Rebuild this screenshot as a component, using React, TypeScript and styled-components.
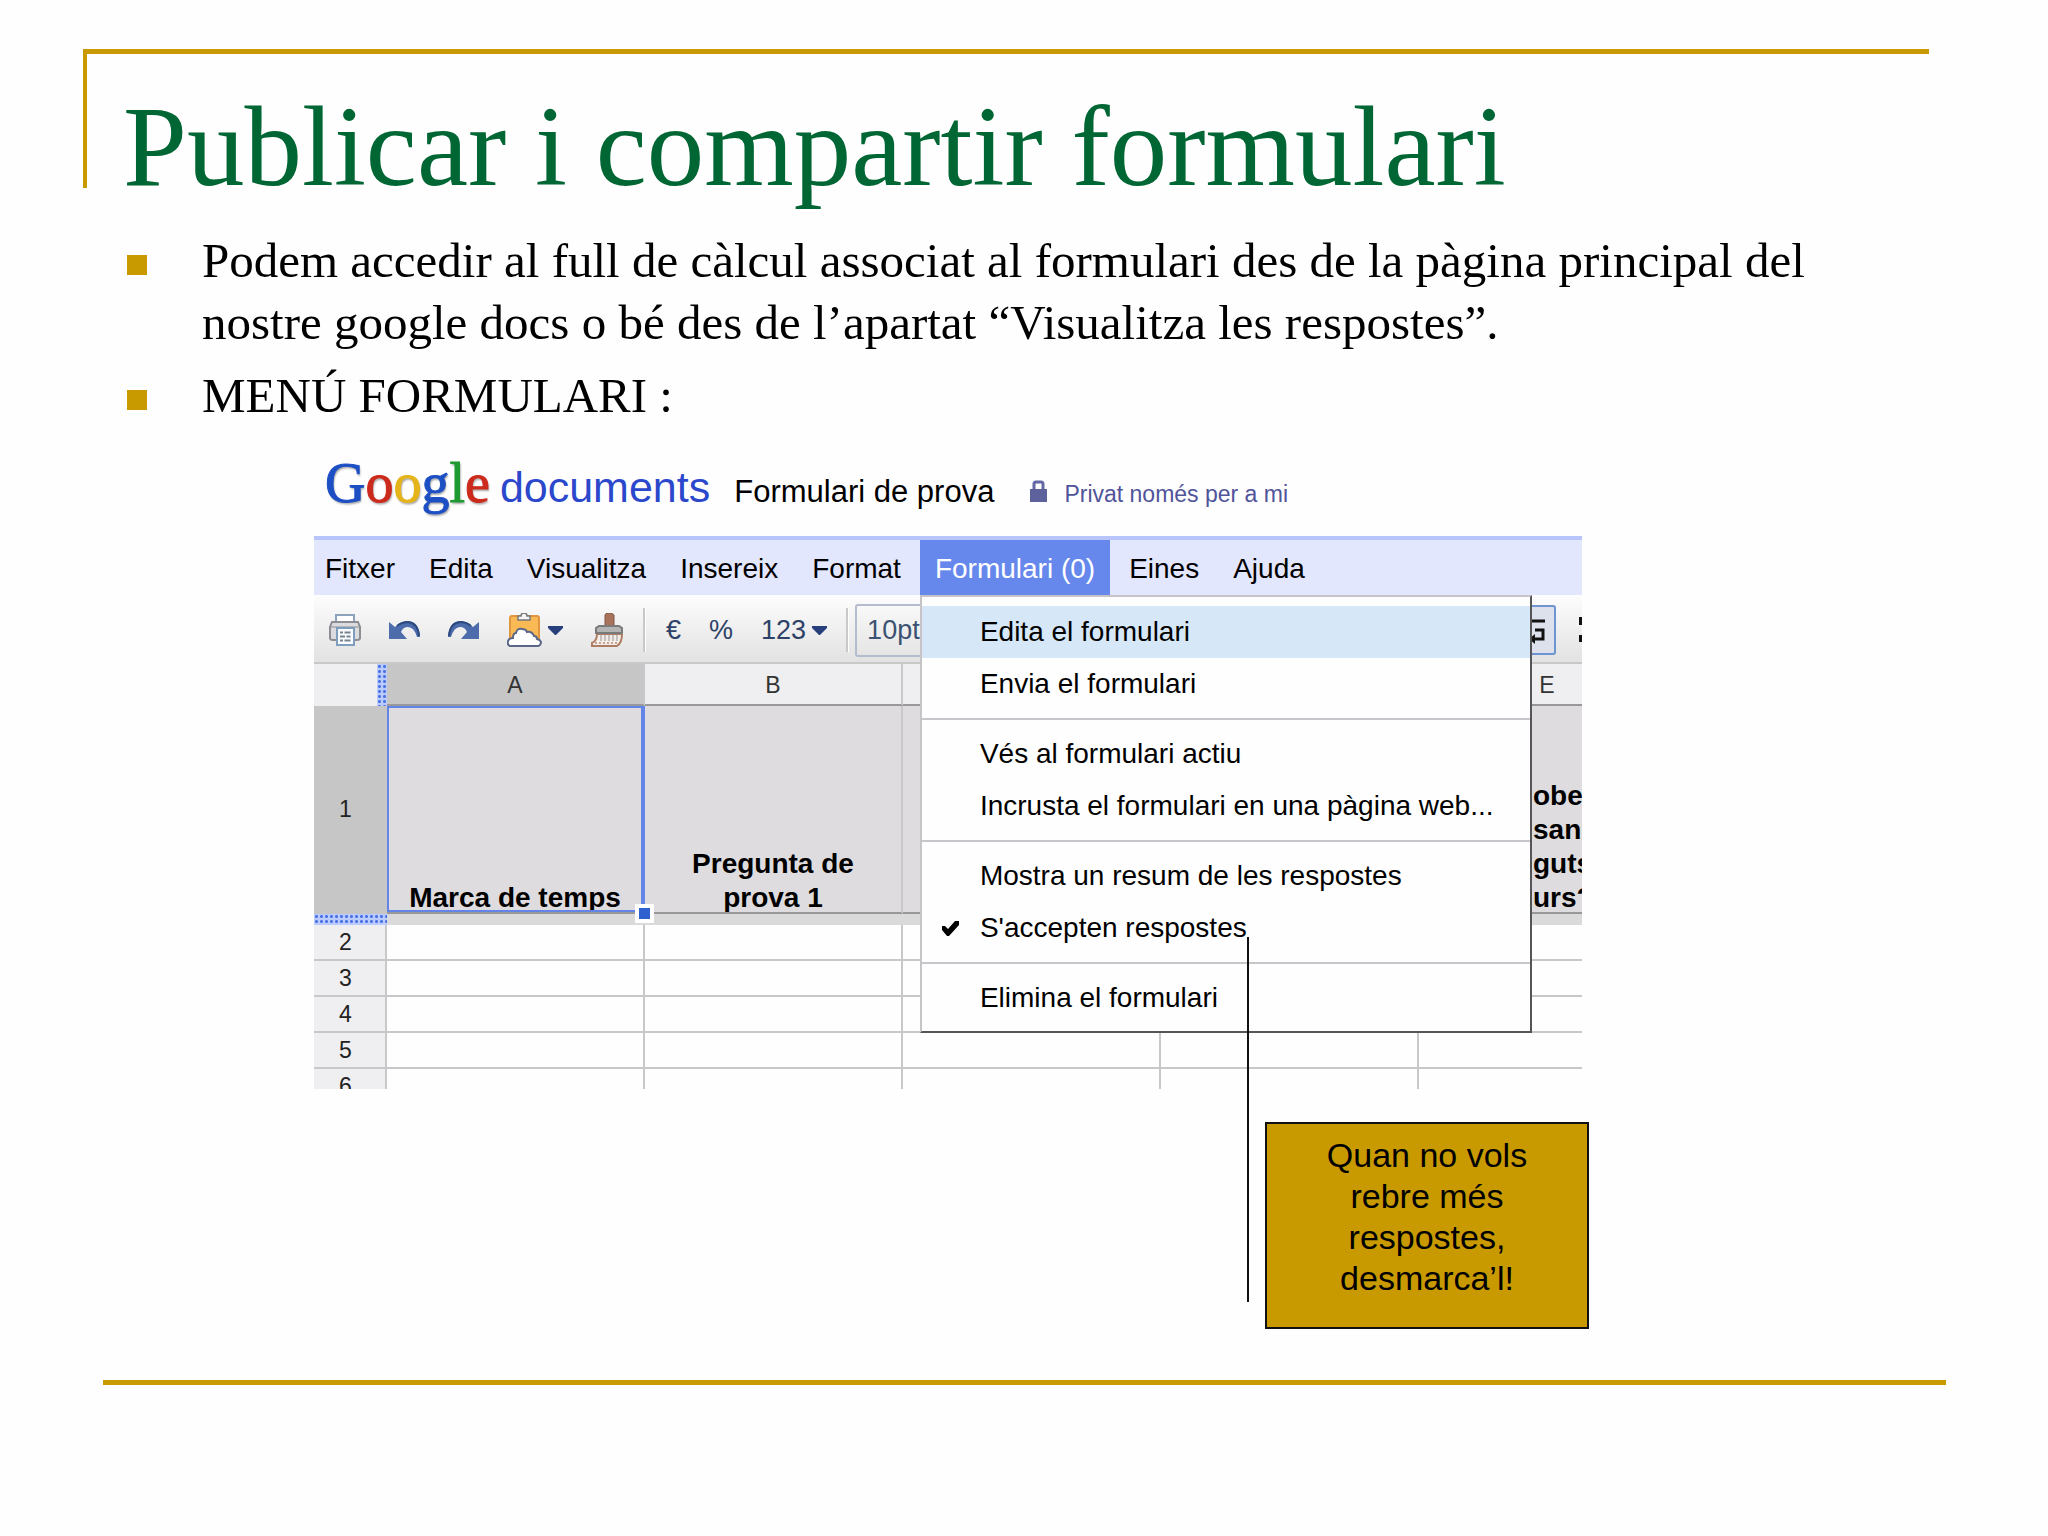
import React from "react";
import styled, { createGlobalStyle, css } from "styled-components";

const gold = "#c99a00";
const sans = '"Liberation Sans", Arial, sans-serif';
const serif = '"Liberation Serif", "Times New Roman", serif';

const GlobalStyle = createGlobalStyle`
  *, *::before, *::after { box-sizing: border-box; }
  body { margin: 0; background: #fefefe; color: #000; font-family: ${sans}; }
  button, select { font: inherit; color: inherit; margin: 0; }
`;

const Slide = styled.main`
  min-height: 100vh;
  padding: 49px 102px 60px 83px;
`;

const SlideHeader = styled.header`
  height: 139px;
  margin-right: 17px;
  padding: 26px 0 0 36px;
  border-top: 5px solid ${gold};
  border-left: 4px solid ${gold};
`;

const Title = styled.h1`
  margin: 0;
  font: 400 115px/134px ${serif};
  color: #006633;
  white-space: nowrap;
`;

const Points = styled.ul`
  display: flex;
  flex-direction: column;
  gap: 11px;
  margin: 42px 0 0 44px;
  padding: 0;
  list-style: none;
  font: 400 49px/62px ${serif};
`;

const Point = styled.li`
  display: flex;
  gap: 55px;
  max-width: 1700px;

  &::before {
    content: "";
    flex: none;
    width: 20px;
    height: 20px;
    margin-top: 25px;
    background: ${gold};
  }
`;

const Figure = styled.figure`
  position: relative;
  margin: 33px 0 0 231px;
`;

const Capture = styled.div`
  max-width: 1268px;
`;

const DocHeader = styled.div`
  display: flex;
  align-items: baseline;
  height: 76px;
  padding-left: 11px;
  line-height: 46px;
  white-space: nowrap;
`;

const Logo = styled.span`
  font-family: ${serif};
  font-size: 56px;
  text-shadow: 1px 2px 2px rgba(0, 0, 0, 0.35);
`;

const Letter = styled.span<{ $color: string }>`
  color: ${(p) => p.$color};
  -webkit-text-stroke: 1px ${(p) => p.$color};
`;

const Product = styled.span`
  margin-left: 10px;
  font-size: 43px;
  color: #2b48cc;
`;

const DocName = styled.span`
  margin-left: 24px;
  font-size: 31px;
`;

const Privacy = styled.span`
  display: flex;
  align-items: baseline;
  gap: 17px;
  margin-left: 36px;
  font-size: 23px;
  color: #50549a;
`;

const MenuBar = styled.nav`
  display: flex;
  gap: 4px;
  height: 59px;
  border-top: 4px solid #b7c5fb;
  background: #e3e7fd;
`;

const MenuSlot = styled.div`
  position: relative;
  display: flex;
`;

const MenuButton = styled.button<{ $open?: boolean }>`
  padding: 2px 15px 0;
  border: 0;
  background: ${(p) => (p.$open ? "#6688ec" : "transparent")};
  color: ${(p) => (p.$open ? "#fff" : "#000")};
  font-size: 28px;
  white-space: nowrap;

  ${MenuSlot}:first-child & {
    padding-left: 11px;
  }
`;

const Dropdown = styled.div`
  position: absolute;
  z-index: 2;
  top: 100%;
  left: 0;
  width: 612px;
  padding: 9px 0 7px;
  border: 2px solid #555457;
  border-top-color: #c6c4c6;
  border-left-color: #c6c4c6;
  background: #fefefe;
`;

const Item = styled.button<{ $active?: boolean }>`
  display: flex;
  align-items: center;
  width: 100%;
  height: 52px;
  padding: 0;
  border: 0;
  background: ${(p) => (p.$active ? "#d6e8f7" : "transparent")};
  font-size: 28px;
  text-align: left;
`;

const Mark = styled.span`
  display: flex;
  justify-content: center;
  width: 58px;
`;

const Divider = styled.hr`
  height: 2px;
  margin: 8px 0;
  border: 0;
  background: #c8c6ca;
`;

const Toolbar = styled.div`
  display: flex;
  align-items: center;
  height: 69px;
  padding: 3px 0 0 1px;
  overflow: hidden;
  border-bottom: 2px solid #c8c8c8;
  background: linear-gradient(#fdfdfd, #e2e2e2);
`;

const Tool = styled.button`
  display: flex;
  align-items: center;
  gap: 6px;
  flex: none;
  height: 50px;
  padding: 0 14px;
  border: 0;
  background: transparent;
  color: #2d4266;
  font-size: 27px;
`;

const ToolSeparator = styled.span`
  flex: none;
  width: 3px;
  height: 44px;
  margin: 0 6px 0 5px;
  border-left: 2px solid #c9c9cb;
  border-right: 1px solid #fff;
`;

const SizeSelect = styled.select`
  flex: none;
  width: 130px;
  height: 53px;
  padding: 0 10px;
  border: 2px solid #b4bccd;
  border-radius: 3px;
  background: transparent;
  color: #3c5272;
  font-size: 27px;
  appearance: none;
`;

const WrapTool = styled.button`
  display: flex;
  align-items: center;
  justify-content: flex-end;
  flex: none;
  width: 54px;
  height: 50px;
  margin-left: auto;
  padding: 0 8px;
  border: 2px solid #6e94d2;
  border-radius: 3px;
  background: #dde1ec;
`;

const ClippedTool = styled.button`
  flex: none;
  width: 26px;
  padding: 0 0 0 23px;
  border: 0;
  background: transparent;
`;

const Sheet = styled.div`
  height: 425px;
  overflow: hidden;
`;

const Grid = styled.table`
  width: 1363px;
  table-layout: fixed;
  border-collapse: separate;
  border-spacing: 0;
`;

const RowHeadCol = styled.col`
  width: 73px;
`;

const dots = css`
  background-color: #bccbfd;
  background-image: radial-gradient(circle, #4a72e2 1px, transparent 2px);
  background-size: 5px 5px;
`;

const Corner = styled.td`
  padding: 0;
  background: #efeef1;
`;

const FreezeHandle = styled.div`
  width: 10px;
  height: 42px;
  margin-left: auto;
  ${dots}
`;

const ColHead = styled.th<{ $selected?: boolean }>`
  height: 42px;
  padding: 2px 0 0;
  border-right: 2px solid #c8c7ca;
  border-bottom: 2px solid #98979a;
  background: ${(p) => (p.$selected ? "#c6c6c7" : "#efeef0")};
  color: #333;
  font-size: 23px;
  font-weight: 400;
`;

const RowHead = styled.th<{ $selected?: boolean }>`
  padding: 0 8px 0 0;
  border-right: 2px solid #c8c7ca;
  border-bottom: 2px solid #c8c7ca;
  ${(p) =>
    p.$selected && css`border-color: #c6c6c7;`}
  background: ${(p) => (p.$selected ? "#c6c6c7" : "#efeef0")};
  color: #222;
  font-size: 23px;
  line-height: 26px;
  font-weight: 400;
`;

const QuestionCell = styled.td`
  position: relative;
  height: 208px;
  padding: 0;
  border-right: 2px solid #c8c7ca;
  border-bottom: 2px solid #98979a;
  background: #dedcde;
  font-size: 28px;
  line-height: 34px;
  font-weight: 700;
  text-align: center;
`;

const Question = styled.div<{ $selected?: boolean; $cut?: boolean }>`
  display: flex;
  flex-direction: column;
  justify-content: flex-end;
  height: 206px;
  overflow: hidden;
  ${(p) =>
    p.$selected &&
    css`
      &::after {
        content: "";
        position: absolute;
        inset: 0 -2px 0 0;
        border: 2px solid #6485e8;
        border-right-width: 4px;
      }
    `}
  ${(p) =>
    p.$cut &&
    css`
      padding-left: 114px;
      text-align: left;
    `}
`;

const QuestionText = styled.span`
  margin-bottom: -3px;
  white-space: nowrap;
`;

const FillHandle = styled.span`
  position: absolute;
  z-index: 1;
  right: -11px;
  bottom: -11px;
  width: 19px;
  height: 19px;
  border: 4px solid #fff;
  background: #2f60d0;
`;

const FreezeRowHandle = styled.td`
  height: 11px;
  padding: 0;
  ${dots}
`;

const FreezeBar = styled.td`
  height: 11px;
  padding: 0;
  background: #dadadb;
`;

const Cell = styled.td`
  height: 36px;
  padding: 0;
  border-right: 2px solid #c8c7ca;
  border-bottom: 2px solid #c8c7ca;
  background: #fefefe;
`;

const Leader = styled.div`
  position: absolute;
  z-index: 3;
  top: 477px;
  left: 933px;
  width: 2px;
  height: 365px;
  background: #111;
`;

const Callout = styled.figcaption`
  width: 324px;
  margin: 33px 0 0 951px;
  padding: 11px 50px 28px;
  border: 2px solid #111;
  background: ${gold};
  font-size: 34px;
  line-height: 41px;
  text-align: center;
`;

const BottomRule = styled.hr`
  height: 5px;
  margin: 51px 0 0 20px;
  border: 0;
  background: ${gold};
`;

const LockIcon = () => (
  <svg width="17" height="22" viewBox="0 0 17 22" aria-hidden="true">
    <path d="M4 10V4q0-2 2-2h5q2 0 2 2v6" fill="none" stroke="#6468a4" strokeWidth="3" />
    <rect y="9" width="17" height="13" fill="#5d619c" />
  </svg>
);

const PrinterIcon = () => (
  <svg width="32" height="32" viewBox="0 0 32 32" aria-hidden="true">
    <path d="M7 9V1h18v8" fill="#fff" stroke="#8ba3bd" strokeWidth="2" />
    <path d="M3 8h26l2 5v11q0 2-3 2H4q-3 0-3-2V13z" fill="#dcdcde" stroke="#8c8e94" strokeWidth="2" />
    <path d="M2 13h28" stroke="#b4b5ba" strokeWidth="2" />
    <rect x="8" y="14" width="17" height="17" fill="#fafcff" stroke="#7f9dbc" strokeWidth="2" />
    <path d="M11 18.500h3m1.500 0h6M11 22.500h5m1.500 0h4M11 26.500h3m1.500 0h6" stroke="#77828f" strokeWidth="2" />
  </svg>
);

const UndoIcon = () => (
  <svg width="31" height="19" viewBox="0 0 31 19" aria-hidden="true">
    <path d="M0 1l6 5Q12 0 19 0q11 1 12 16h-3Q25 6 19 6q-5 0-7 5l6 7H0z" fill="#4c6cab" />
    <path d="M8 5q5-4 11-4 10 1 11 14" fill="none" stroke="#2c4a80" strokeWidth="2" />
  </svg>
);

const RedoIcon = () => (
  <svg width="31" height="19" viewBox="0 0 31 19" aria-hidden="true">
    <path d="M31 1l-6 5Q19 0 12 0 1 1 0 16h3Q6 6 12 6q5 0 7 5l-6 7h18z" fill="#4c6cab" />
    <path d="M23 5q-5-4-11-4Q2 2 1 15" fill="none" stroke="#2c4a80" strokeWidth="2" />
  </svg>
);

const ClipboardIcon = () => (
  <svg width="35" height="34" viewBox="0 0 35 34" aria-hidden="true">
    <rect x="3" y="3" width="29" height="27" rx="2" fill="#f9b955" stroke="#de9640" strokeWidth="2" />
    <path d="M11 3h3q0-3 3-3t3 3h3v4H11z" fill="#f4f4f4" stroke="#77777c" strokeWidth="1.500" />
    <path
      d="M3 33q-3-1-2-5 1-3 5-3 0-5 3-5 1-5 6-4 4 0 5 3 5-1 7 4 3 0 3 3 4 1 4 4-1 3-3 3z"
      fill="#fff"
      stroke="#5a6788"
      strokeWidth="2"
    />
  </svg>
);

const BrushIcon = () => (
  <svg width="33" height="34" viewBox="0 0 33 34" aria-hidden="true">
    <path d="M14 13V2q0-2 4-2t5 2v11" fill="#a9735b" stroke="#7e5848" strokeWidth="1" />
    <path d="M6 21q0 7-5 9v3h25q5-3 5-12z" fill="#f3ece8" stroke="#ae7c62" strokeWidth="2" />
    <path d="M5 20v-5l3-2h20l3 2v5z" fill="#b4b4b4" stroke="#7a7a7a" strokeWidth="2" />
    <path d="M10 22v6m4-6v6m4-6v6m4-6v6m4-6v6" stroke="#b5b1af" strokeWidth="1.500" />
    <path d="M4 30h23" stroke="#b98c76" strokeWidth="1.500" strokeDasharray="2 2" />
  </svg>
);

const Caret = () => (
  <svg width="15" height="9" viewBox="0 0 15 9" aria-hidden="true">
    <path d="M0 0h15v2L8 9H7L0 2z" fill="#27407c" />
  </svg>
);

const WrapIcon = () => (
  <svg width="28" height="30" viewBox="0 0 28 30" aria-hidden="true">
    <path d="M2 6h25M17 15h8v9H14" fill="none" stroke="#111" strokeWidth="3" />
    <path d="M17 19v10l-6-5z" fill="#111" />
  </svg>
);

const AlignMark = () => (
  <svg width="3" height="30" viewBox="0 0 3 30" aria-hidden="true">
    <path d="M0 4h3v8H0zM0 22h3v7H0z" fill="#111" />
  </svg>
);

const CheckIcon = () => (
  <svg width="17" height="16" viewBox="0 0 17 16" aria-hidden="true">
    <path d="M0 6h3l3 3 7-8h4v4L7 16H5L0 10z" fill="#000" />
  </svg>
);

const logoLetters = [
  ["G", "#1d4fc4"],
  ["o", "#cc2a1c"],
  ["o", "#e5b41a"],
  ["g", "#1d4fc4"],
  ["l", "#1f9a30"],
  ["e", "#cc2a1c"],
];

const FormMenu = () => (
  <Dropdown role="menu" aria-label="Formulari">
    <Item role="menuitem" $active><Mark />Edita el formulari</Item>
    <Item role="menuitem"><Mark />Envia el formulari</Item>
    <Divider />
    <Item role="menuitem"><Mark />Vés al formulari actiu</Item>
    <Item role="menuitem"><Mark />Incrusta el formulari en una pàgina web...</Item>
    <Divider />
    <Item role="menuitem"><Mark />Mostra un resum de les respostes</Item>
    <Item role="menuitemcheckbox" aria-checked="true">
      <Mark><CheckIcon /></Mark>S'accepten respostes
    </Item>
    <Divider />
    <Item role="menuitem"><Mark />Elimina el formulari</Item>
  </Dropdown>
);

const menus = ["Fitxer", "Edita", "Visualitza", "Insereix", "Format", "Formulari (0)", "Eines", "Ajuda"];
// The two columns under the open menu carry no heading text.
const columns = ["A", "B", "", "", "E"];
const emptyRows = [2, 3, 4, 5, 6];

export default function App() {
  return (
    <>
      <GlobalStyle />
      <Slide>
        <SlideHeader>
          <Title>Publicar i compartir formulari</Title>
        </SlideHeader>

        <Points>
          <Point>
            <span>
              Podem accedir al full de càlcul associat al formulari des de la pàgina principal del
              nostre google docs o bé des de l’apartat “Visualitza les respostes”.
            </span>
          </Point>
          <Point><span>MENÚ FORMULARI :</span></Point>
        </Points>

        <Figure>
          <Capture>
            <DocHeader>
              <Logo>
                {logoLetters.map(([letter, color], i) => (
                  <Letter key={i} $color={color}>{letter}</Letter>
                ))}
              </Logo>
              <Product>documents</Product>
              <DocName>Formulari de prova</DocName>
              <Privacy><LockIcon />Privat només per a mi</Privacy>
            </DocHeader>

            <MenuBar>
              {menus.map((name) => {
                const open = name.startsWith("Formulari");
                return (
                  <MenuSlot key={name}>
                    <MenuButton $open={open} aria-expanded={open}>{name}</MenuButton>
                    {open && <FormMenu />}
                  </MenuSlot>
                );
              })}
            </MenuBar>

            <Toolbar>
              <Tool aria-label="Imprimeix"><PrinterIcon /></Tool>
              <Tool aria-label="Desfés"><UndoIcon /></Tool>
              <Tool aria-label="Refés"><RedoIcon /></Tool>
              <Tool aria-label="Enganxa"><ClipboardIcon /><Caret /></Tool>
              <Tool aria-label="Copia el format"><BrushIcon /></Tool>
              <ToolSeparator />
              <Tool>€</Tool>
              <Tool>%</Tool>
              <Tool>123<Caret /></Tool>
              <ToolSeparator />
              <SizeSelect aria-label="Mida de la lletra" defaultValue="10pt">
                <option>10pt</option>
              </SizeSelect>
              <WrapTool aria-label="Ajusta el text"><WrapIcon /></WrapTool>
              <ClippedTool aria-label="Alinea"><AlignMark /></ClippedTool>
            </Toolbar>

            <Sheet>
              <Grid>
                <colgroup>
                  <RowHeadCol />
                  {columns.map((_, i) => <col key={i} />)}
                </colgroup>
                <thead>
                  <tr>
                    <Corner><FreezeHandle /></Corner>
                    {columns.map((c, i) => (
                      <ColHead key={i} scope="col" $selected={c === "A"}>{c}</ColHead>
                    ))}
                  </tr>
                </thead>
                <tbody>
                  <tr>
                    <RowHead scope="row" $selected>1</RowHead>
                    <QuestionCell>
                      <Question $selected><QuestionText>Marca de temps</QuestionText></Question>
                      <FillHandle />
                    </QuestionCell>
                    <QuestionCell>
                      <Question>
                        <QuestionText>Pregunta de<br />prova 1</QuestionText>
                      </Question>
                    </QuestionCell>
                    <QuestionCell />
                    <QuestionCell />
                    <QuestionCell>
                      <Question $cut>
                        <QuestionText>obes<br />san<br />guts<br />urs?</QuestionText>
                      </Question>
                    </QuestionCell>
                  </tr>
                  <tr>
                    <FreezeRowHandle />
                    <FreezeBar colSpan={5} />
                  </tr>
                  {emptyRows.map((n) => (
                    <tr key={n}>
                      <RowHead scope="row">{n}</RowHead>
                      {columns.map((_, i) => <Cell key={i} />)}
                    </tr>
                  ))}
                </tbody>
              </Grid>
            </Sheet>
          </Capture>

          <Leader />
          <Callout>Quan no vols rebre més respostes, desmarca’l!</Callout>
        </Figure>

        <BottomRule />
      </Slide>
    </>
  );
}
